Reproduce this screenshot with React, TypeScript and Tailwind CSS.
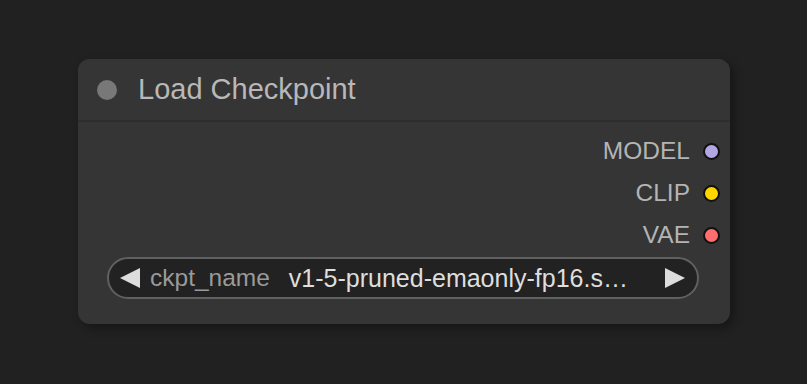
import React from "react";

const Slot = ({ label, color }: { label: string; color: string }) => (
  <div className="flex h-[42px] items-center justify-end gap-[13px] pr-[10px]">
    <span className="text-[24.5px] leading-none text-[#b4b4b4]">{label}</span>
    <span
      className="block h-[17px] w-[17px] rounded-full border-[2px] border-[#111]"
      style={{ backgroundColor: color }}
    />
  </div>
);

export default function App() {
  return (
    <div
      className="h-[384px] w-[807px] bg-[#212121] pl-[78px] pt-[59px]"
      style={{ fontFamily: '"Liberation Sans", Arial, sans-serif' }}
    >
      <div className="flex h-[265px] w-[652px] flex-col overflow-hidden rounded-[12px] bg-[#353535] shadow-[4px_4px_10px_rgba(0,0,0,0.35)]">
        <div className="flex h-[63px] shrink-0 items-center border-b-[2px] border-[#2e2e2e] bg-[#353535] pl-[19px]">
          <span className="block h-[20px] w-[20px] rounded-full bg-[#787878]" />
          <span className="ml-[21px] text-[29px] leading-none text-[#b8b8b8]">
            Load Checkpoint
          </span>
        </div>
        <div className="flex flex-1 flex-col pt-[8px]">
          <Slot label="MODEL" color="#b2a7e2" />
          <Slot label="CLIP" color="#ffd500" />
          <Slot label="VAE" color="#ff6e6e" />
          <div className="ml-[29px] mr-[31px] mt-[1px] flex h-[42px] items-center rounded-full border-[2px] border-[#606060] bg-[#222222] pl-[11px] pr-[12px]">
            <svg width="21" height="20" viewBox="0 0 21 20" className="shrink-0">
              <polygon points="0,10 20,0 20,20" fill="#dddddd" />
            </svg>
            <span className="ml-[9px] whitespace-nowrap text-[24.5px] leading-none text-[#9a9a9a]">
              ckpt_name
            </span>
            <span className="ml-[19px] flex-1 whitespace-nowrap text-[25px] leading-none text-[#dedede]">
              v1-5-pruned-emaonly-fp16.s…
            </span>
            <svg width="21" height="20" viewBox="0 0 21 20" className="shrink-0">
              <polygon points="21,10 1,0 1,20" fill="#dddddd" />
            </svg>
          </div>
        </div>
      </div>
    </div>
  );
}
